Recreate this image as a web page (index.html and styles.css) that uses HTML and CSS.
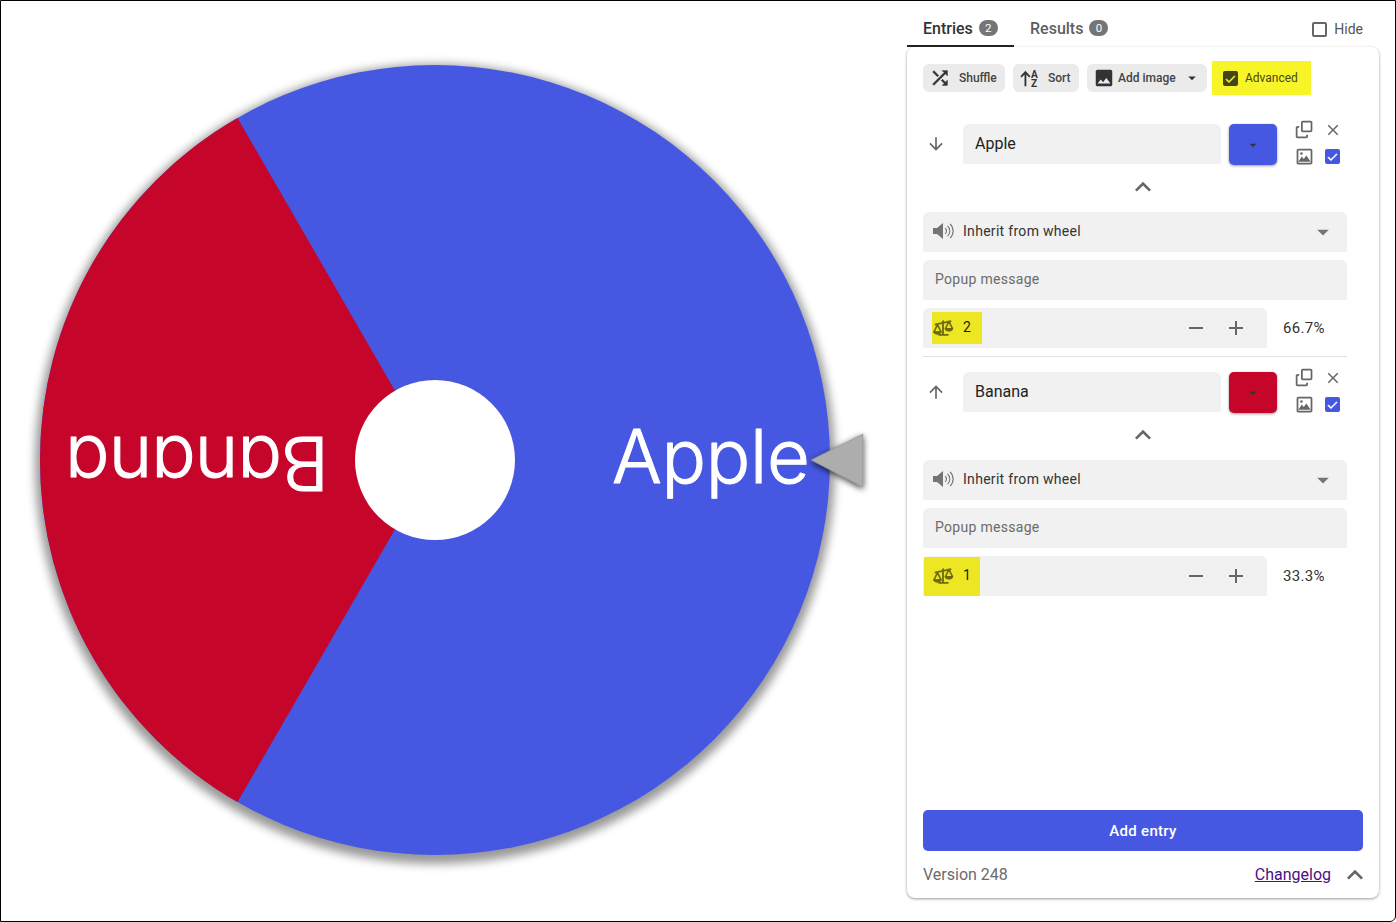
FILE: index.html
```html
<!DOCTYPE html>
<html lang="en">
<head>
    <meta charset="UTF-8">
    <meta name="viewport" content="width=device-width, initial-scale=1.0">
    <title>Wheel entries</title>
    <link rel="stylesheet" href="styles.css">
</head>
<body>
    <svg class="icon-defs" width="0" height="0">
        <symbol id="i-shuffle" viewBox="0 0 24 24"><path d="M10.59 9.17L5.41 4 4 5.41l5.17 5.17 1.42-1.41zM14.5 4l2.04 2.04L4 18.59 5.41 20 17.96 7.46 20 9.5V4h-5.5zm.33 9.41l-1.41 1.41 3.13 3.13L14.5 20H20v-5.5l-2.04 2.04-3.13-3.13z" stroke="currentColor" stroke-width="0.7"/></symbol>
        <symbol id="i-image" viewBox="0 0 24 24"><path d="M21 19V5c0-1.1-.9-2-2-2H5c-1.1 0-2 .9-2 2v14c0 1.1.9 2 2 2h14c1.1 0 2-.9 2-2zM8.5 13.5l2.5 3.01L14.5 12l4.5 6H5l3.5-4.5z"/><circle cx="8" cy="8" r="2"/></symbol>
        <symbol id="i-image-line" viewBox="0 0 24 24"><path d="M19 5v14H5V5h14m0-2H5c-1.1 0-2 .9-2 2v14c0 1.1.9 2 2 2h14c1.1 0 2-.9 2-2V5c0-1.1-.9-2-2-2zm-4.86 7.86l-3 3.87L9 12.14 5 18h14l-4.86-7.14z"/><circle cx="8.5" cy="8.5" r="1.5"/></symbol>
        <symbol id="i-down" viewBox="0 0 24 24"><path d="M20 12l-1.41-1.41L13 16.17V4h-2v12.17l-5.58-5.59L4 12l8 8 8-8z"/></symbol>
        <symbol id="i-up" viewBox="0 0 24 24"><path d="M4 12l1.41 1.41L11 7.83V20h2V7.83l5.58 5.59L20 12l-8-8-8 8z"/></symbol>
        <symbol id="i-copy" viewBox="0 0 24 24"><path d="M10 2h9c1.1 0 2 .9 2 2v9c0 1.1-.9 2-2 2h-9c-1.1 0-2-.9-2-2V4c0-1.1.9-2 2-2zm0 2v9h9V4h-9z"/><path d="M6 8v2H4v10h10v-2h2v2c0 1.1-.9 2-2 2H4c-1.1 0-2-.9-2-2V10c0-1.1.9-2 2-2h2z"/></symbol>
        <symbol id="i-close" viewBox="0 0 24 24"><path d="M19 6.41L17.59 5 12 10.59 6.41 5 5 6.41 10.59 12 5 17.59 6.41 19 12 13.41 17.59 19 19 17.59 13.41 12z"/></symbol>
        <symbol id="i-less" viewBox="0 0 24 24"><path d="M12 8l-6 6 1.41 1.41L12 10.83l4.59 4.58L18 14z"/></symbol>
        <symbol id="i-volume" viewBox="0 0 24 24"><path d="M2 9v6h4l6 5V4L6 9H2z"/><path d="M14 9.2c1 .6 1.5 1.6 1.5 2.8s-.5 2.2-1.5 2.8M16.5 7c1.500 1.200 2.300 3 2.300 5s-.8 3.800-2.300 5M19 4.800c2 1.800 3.100 4.400 3.100 7.200s-1.100 5.400-3.100 7.200" fill="none" stroke="currentColor" stroke-width="1.100"/></symbol>
        <symbol id="i-balance" viewBox="0 0 24 24">
            <path d="M3 9.500L21 5.500M12 5v15M7 20.500h11" fill="none" stroke="currentColor" stroke-width="2"/>
            <path d="M6 9.500L2 17.500h8zM18.500 6L14.500 14h8z" fill="none" stroke="currentColor" stroke-width="1.700" stroke-linejoin="round"/>
            <path d="M1.500 17h9c0 2-2 3.500-4.500 3.500S1.500 19 1.500 17zM14 13.500h9c0 2-2 3.500-4.500 3.500S14 15.500 14 13.500z"/>
        </symbol>
        <symbol id="i-minus" viewBox="0 0 24 24"><path d="M19 13H5v-2h14v2z"/></symbol>
        <symbol id="i-plus" viewBox="0 0 24 24"><path d="M19 13h-6v6h-2v-6H5v-2h6V5h2v6h6v2z"/></symbol>
        <symbol id="i-drop" viewBox="0 0 24 24"><path d="M7 10l5 5 5-5z"/></symbol>
        <symbol id="i-check" viewBox="0 0 24 24"><path d="M9.500 16.200L5.800 12.500l-1.300 1.300 5 5 10-10-1.300-1.300z" stroke="currentColor" stroke-width="0.800"/></symbol>
    </svg>

    <main class="wheel-pane">
        <svg class="wheel" width="906" height="920" viewBox="0 0 906 920">
            <defs>
                <filter id="rim" x="-10%" y="-10%" width="120%" height="120%">
                    <feGaussianBlur stdDeviation="5"/>
                </filter>
                <filter id="pointer-shadow" x="-50%" y="-50%" width="200%" height="200%">
                    <feDropShadow dx="0" dy="2" stdDeviation="3" flood-color="#000" flood-opacity="0.75"/>
                </filter>
            </defs>
            <circle class="wheel-shadow" cx="434" cy="463" r="400" filter="url(#rim)"/>
            <circle class="wheel-apple" cx="434" cy="459" r="395"/>
            <path class="wheel-banana" d="M434 459 L236.500 116.900 A395 395 0 0 0 236.500 801.100 Z"/>
            <text class="wheel-label" x="611" y="481.500" textLength="198">Apple</text>
            <text class="wheel-label" x="58" y="482" textLength="264" transform="rotate(180 193 459)">Banana</text>
            <circle class="wheel-hub" cx="434" cy="459" r="80"/>
            <polygon class="wheel-pointer" points="810,459 862,433 862,486" filter="url(#pointer-shadow)"/>
        </svg>
    </main>

    <aside class="side">
        <div class="tabs">
            <div class="tab tab-active">Entries <span class="count">2</span></div>
            <div class="tab">Results <span class="count">0</span></div>
            <label class="hide-box"><span class="box"></span>Hide</label>
        </div>

        <section class="card">
            <div class="toolbar">
                <button class="tool tool-shuffle"><svg class="ico22"><use href="#i-shuffle"/></svg><span>Shuffle</span></button>
                <button class="tool tool-sort">
                    <svg class="ico22" viewBox="0 0 24 24">
                        <path d="M7 4L1.500 10l1.400 1.400L6 8.200V21h2V8.200l3.100 3.200L12.500 10z"/>
                        <text class="sort-letter" x="13" y="11.500">A</text>
                        <text class="sort-letter" x="13" y="22">Z</text>
                    </svg><span>Sort</span>
                </button>
                <button class="tool tool-image"><svg class="ico22"><use href="#i-image"/></svg><span>Add image</span><svg class="ico18"><use href="#i-drop"/></svg></button>
                <div class="advanced"><span class="adv-box"><svg><use href="#i-check"/></svg></span>Advanced</div>
            </div>

            <div class="entry">
                <div class="entry-top">
                    <svg class="move"><use href="#i-down"/></svg>
                    <div class="field name">Apple</div>
                    <div class="swatch swatch-blue"><svg><use href="#i-drop"/></svg></div>
                    <div class="row-actions">
                        <svg><use href="#i-copy"/></svg>
                        <svg class="row-close"><use href="#i-close"/></svg>
                        <svg><use href="#i-image-line"/></svg>
                        <span class="on-box"><svg><use href="#i-check"/></svg></span>
                    </div>
                </div>
                <svg class="less"><use href="#i-less"/></svg>
                <div class="field select"><svg><use href="#i-volume"/></svg>Inherit from wheel<svg class="select-drop"><use href="#i-drop"/></svg></div>
                <div class="field popup">Popup message</div>
                <div class="weight-row">
                    <div class="field weight">
                        <span class="mark mark-a"><svg><use href="#i-balance"/></svg>2</span>
                        <svg class="step step-first"><use href="#i-minus"/></svg>
                        <svg class="step"><use href="#i-plus"/></svg>
                    </div>
                    <span class="pct">66.7%</span>
                </div>
            </div>

            <div class="entry entry-last">
                <div class="entry-top">
                    <svg class="move"><use href="#i-up"/></svg>
                    <div class="field name">Banana</div>
                    <div class="swatch swatch-red"><svg><use href="#i-drop"/></svg></div>
                    <div class="row-actions">
                        <svg><use href="#i-copy"/></svg>
                        <svg class="row-close"><use href="#i-close"/></svg>
                        <svg><use href="#i-image-line"/></svg>
                        <span class="on-box"><svg><use href="#i-check"/></svg></span>
                    </div>
                </div>
                <svg class="less"><use href="#i-less"/></svg>
                <div class="field select"><svg><use href="#i-volume"/></svg>Inherit from wheel<svg class="select-drop"><use href="#i-drop"/></svg></div>
                <div class="field popup">Popup message</div>
                <div class="weight-row">
                    <div class="field weight">
                        <span class="mark mark-b"><svg><use href="#i-balance"/></svg>1</span>
                        <svg class="step step-first"><use href="#i-minus"/></svg>
                        <svg class="step"><use href="#i-plus"/></svg>
                    </div>
                    <span class="pct">33.3%</span>
                </div>
            </div>

            <button class="add-entry">Add entry</button>
            <div class="card-foot">
                <span>Version 248</span>
                <a class="changelog" href="#">Changelog</a>
                <svg><use href="#i-less"/></svg>
            </div>
        </section>
    </aside>
</body>
</html>
```

FILE: styles.css
```css
html, body {
    margin: 0;
    padding: 0;
    height: 100%;
    background-color: #ffffff;
    font-family: Roboto, sans-serif;
    color: #222222;
}

body {
    box-sizing: border-box;
    display: flex;
    height: 922px;
    border: 1px solid #000000;
    border-bottom-right-radius: 6px;
    overflow: hidden;
}

svg {
    fill: currentColor;
    display: block;
    flex: none;
}

.icon-defs {
    position: absolute;
}

.ico22 {
    width: 22px;
    height: 22px;
}

.ico18 {
    width: 18px;
    height: 18px;
}

/* wheel */
.wheel-pane {
    width: 906px;
    flex: none;
}

.wheel-shadow {
    fill: #000000;
    opacity: 0.4;
}

.wheel-apple {
    fill: #4658e2;
}

.wheel-banana {
    fill: #c50529;
}

.wheel-hub {
    fill: #ffffff;
}

.wheel-pointer {
    fill: #adadad;
    stroke: #8a8a8a;
    stroke-width: 0.6px;
}

.wheel-label {
    fill: #ffffff;
    stroke: #ffffff;
    stroke-width: 1px;
    stroke-linejoin: round;
    font-family: Inter, sans-serif;
    font-feature-settings: "cv11" 1;
    font-size: 74px;
    font-weight: 300;
}

/* right column */
.side {
    width: 472px;
    flex: none;
}

.tabs {
    display: flex;
    align-items: flex-start;
    height: 46px;
    box-sizing: border-box;
    padding-top: 12px;
}

.tab {
    display: flex;
    align-items: center;
    gap: 6px;
    height: 34px;
    padding: 0 16px 4px;
    box-sizing: border-box;
    font-size: 16px;
    font-weight: 500;
    color: #5f5f5f;
}

.tab-active {
    width: 107px;
    padding-bottom: 2px;
    color: #333333;
    border-bottom: 2px solid #222222;
}

.count {
    display: inline-block;
    width: 19px;
    height: 16px;
    line-height: 16px;
    border-radius: 8px;
    background-color: #757575;
    color: #ffffff;
    font-size: 11.5px;
    font-weight: 400;
    text-align: center;
}

.hide-box {
    display: flex;
    align-items: center;
    height: 34px;
    padding-bottom: 2px;
    box-sizing: border-box;
    margin-left: auto;
    margin-right: 16px;
    font-size: 14px;
    color: #555555;
}

.box {
    width: 11px;
    height: 11px;
    margin-right: 7px;
    border: 2px solid #666666;
    border-radius: 2px;
}

.card {
    display: flex;
    flex-direction: column;
    height: 851px;
    box-sizing: border-box;
    padding: 17px 16px 0;
    border-radius: 8px;
    background-color: #ffffff;
    box-shadow: 0 1px 3px rgba(0, 0, 0, 0.4);
}

.toolbar {
    display: flex;
    align-items: center;
    height: 34px;
    margin-top: -3px;
    gap: 8px;
}

.tool {
    display: flex;
    align-items: center;
    height: 28px;
    padding: 0 6px;
    border: none;
    border-radius: 6px;
    background-color: #ebebeb;
    color: #444444;
    font-family: Roboto, sans-serif;
    font-size: 12px;
    font-weight: 500;
    white-space: nowrap;
}

.tool svg {
    color: #333333;
}

.tool-shuffle {
    width: 82px;
    gap: 8px;
}

.tool-sort {
    width: 66px;
    gap: 7px;
}

.tool-image {
    width: 120px;
    gap: 3px;
}

.tool-image .ico18 {
    margin-left: 4px;
}

.sort-letter {
    font-family: Roboto, sans-serif;
    font-size: 11px;
    font-weight: 700;
}

.advanced {
    display: flex;
    align-items: center;
    width: 99px;
    height: 34px;
    margin-left: -3px;
    padding-left: 11px;
    box-sizing: border-box;
    background-color: #f7f428;
    color: #47471a;
    font-size: 12px;
    font-weight: 400;
}

.adv-box {
    width: 15px;
    height: 15px;
    margin-right: 7px;
    border-radius: 2px;
    background-color: #45451c;
    color: #f7f428;
}

.adv-box svg {
    width: 15px;
    height: 15px;
}

/* entries */
.entry {
    margin-top: 29px;
    padding-bottom: 8px;
    width: 424px;
    border-bottom: 1px solid #e2e2e2;
}

.entry-last {
    margin-top: 15px;
    border-bottom: none;
}

.entry-top {
    display: flex;
    align-items: flex-start;
}

.move {
    width: 20px;
    height: 20px;
    margin: 10px 17px 0 3px;
    color: #666666;
}

.field {
    background-color: #f1f1f1;
    border-radius: 6px 6px 0 0;
}

.name {
    width: 258px;
    height: 40px;
    line-height: 40px;
    padding-left: 12px;
    box-sizing: border-box;
    font-size: 16px;
}

.swatch {
    display: flex;
    align-items: center;
    justify-content: center;
    width: 48px;
    height: 41px;
    margin-left: 8px;
    border-radius: 5px;
    box-shadow: 0 1px 3px rgba(0, 0, 0, 0.4);
    color: #333333;
}

.swatch svg {
    width: 16px;
    height: 16px;
}

.swatch-blue {
    background-color: #4658e2;
}

.swatch-red {
    background-color: #c50529;
}

.row-actions {
    display: grid;
    grid-template-columns: 22px 22px;
    grid-auto-rows: 22px;
    column-gap: 6px;
    row-gap: 5px;
    margin: -5px 0 -3px 17px;
    color: #666666;
}

.row-actions svg {
    width: 21px;
    height: 21px;
}

.row-actions .row-close {
    width: 18px;
    height: 18px;
    margin: 2px 0 0 2px;
}

.on-box {
    display: block;
    width: 15px;
    height: 15px;
    margin: 3px 0 0 3px;
    border-radius: 2px;
    background-color: #4658e2;
    color: #ffffff;
}

.on-box svg {
    width: 15px;
    height: 15px;
}

.less {
    width: 32px;
    height: 32px;
    margin: 6px 0 0 204px;
    color: #666666;
}

.select {
    display: flex;
    align-items: center;
    box-sizing: border-box;
    height: 40px;
    margin-top: 9px;
    padding: 0 0 2px 8px;
    font-size: 14px;
    letter-spacing: 0.3px;
    color: #333333;
}

.select svg {
    width: 24px;
    height: 24px;
    margin-right: 8px;
    color: #757575;
}

.select .select-drop {
    width: 28px;
    height: 28px;
    margin: 2px 10px 0 auto;
}

.popup {
    height: 40px;
    line-height: 38px;
    margin-top: 8px;
    padding-left: 12px;
    font-size: 14px;
    letter-spacing: 0.3px;
    color: #6b6b6b;
}

.weight-row {
    display: flex;
    align-items: center;
    margin-top: 8px;
}

.weight {
    display: flex;
    align-items: center;
    width: 344px;
    height: 40px;
}

.mark {
    display: flex;
    align-items: center;
    box-sizing: border-box;
    font-size: 14px;
    color: #1f1f00;
    background-color: #ece623;
}

.mark svg {
    width: 22px;
    height: 22px;
    margin-right: 9px;
    color: #6f6a10;
}

.mark-a {
    width: 50px;
    height: 32px;
    margin-left: 9px;
    padding-bottom: 2px;
}

.mark-b {
    width: 56px;
    height: 39px;
    margin-left: 1px;
    padding: 0 0 2px 8px;
}

.step {
    width: 24px;
    height: 24px;
    margin-right: 16px;
    color: #666666;
}

.mark-a + .step-first {
    margin-left: 202px;
}

.mark-b + .step-first {
    margin-left: 204px;
}

.pct {
    margin-left: 16px;
    font-size: 15px;
    letter-spacing: 0.3px;
    color: #333333;
}

/* bottom */
.add-entry {
    width: 440px;
    height: 41px;
    margin-top: auto;
    border: none;
    border-radius: 5px;
    background-color: #4658e2;
    color: #ffffff;
    font-family: Roboto, sans-serif;
    font-size: 15px;
    letter-spacing: 0.3px;
    font-weight: 500;
}

.card-foot {
    display: flex;
    align-items: center;
    height: 47px;
    font-size: 16px;
    color: #6b6b6b;
}

.changelog {
    margin-left: auto;
    margin-right: 8px;
    color: #4b0f83;
}

.card-foot svg {
    width: 32px;
    height: 32px;
    margin-right: -8px;
    color: #666666;
}
```
